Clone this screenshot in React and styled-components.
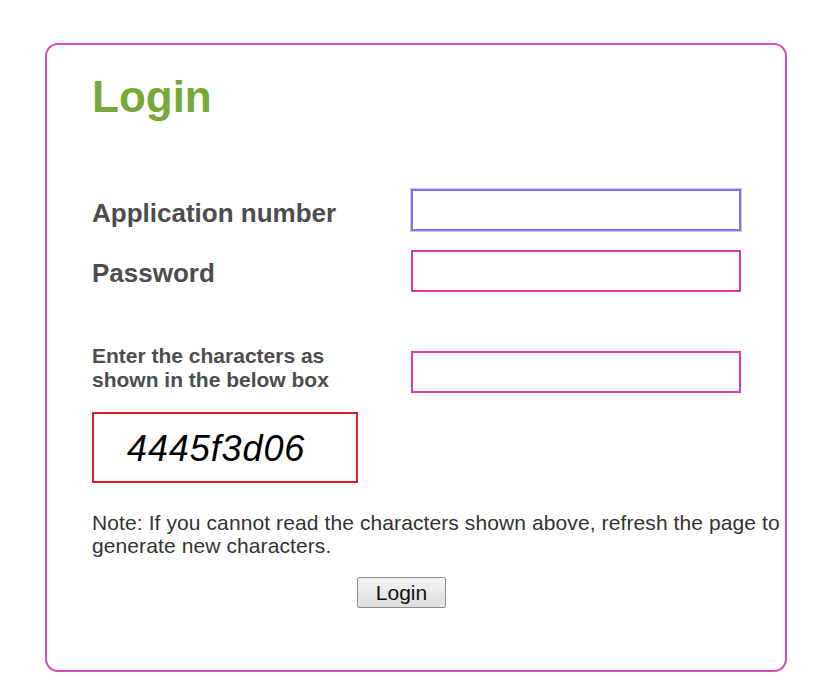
import React from "react";
import styled, { createGlobalStyle } from "styled-components";

const Global = createGlobalStyle`
  html, body { margin: 0; padding: 0; background: #ffffff; }
  body { font-family: "Liberation Sans", Arial, sans-serif; }
`;

const Page = styled.div`
  padding: 43px 0 0 45px;
`;

const Card = styled.div`
  box-sizing: border-box;
  width: 742px;
  height: 629px;
  border: 2px solid #dd4bb8;
  border-radius: 13px;
  padding: 0 0 0 45px;
  display: flex;
  flex-direction: column;
`;

const Title = styled.h1`
  margin: 26px 0 0 0;
  font-size: 44px;
  line-height: 52px;
  font-weight: bold;
  color: #76a93a;
`;

const Row = styled.div`
  display: grid;
  grid-template-columns: 319px 330px;
  align-items: ${(p) => p.$align || "center"};
  margin-top: ${(p) => p.$top}px;
`;

const Label = styled.label`
  font-size: ${(p) => p.$size || 26}px;
  line-height: ${(p) => p.$lh || 30}px;
  padding-top: ${(p) => p.$pt || 0}px;
  font-weight: bold;
  color: #4d4d4d;
`;

const Input = styled.input`
  box-sizing: border-box;
  width: 330px;
  height: 42px;
  margin: ${(p) => p.$mt || 0}px 0 0 0;
  padding: 0 4px;
  font-size: 20px;
  font-family: inherit;
  outline: none;
  border: 2px solid ${(p) => (p.$focus ? "#8c6fe0" : "#dd3aa8")};
  box-shadow: ${(p) => (p.$focus ? "0 0 0 1px #b7c8fb" : "none")};
  caret-color: #333;
`;

const Captcha = styled.div`
  box-sizing: border-box;
  width: 266px;
  height: 71px;
  margin-top: ${(p) => p.$top}px;
  border: 2px solid #d3222c;
  display: flex;
  align-items: center;
  padding-left: 33px;
  padding-top: 3px;
  font-size: 36px;
  font-style: italic;
  letter-spacing: 0.9px;
  color: #000;
`;

const Note = styled.p`
  margin: 28px 0 0 0;
  font-size: 21px;
  line-height: 23px;
  letter-spacing: 0.1px;
  color: #333;
  width: 700px;
`;

const ButtonRow = styled.div`
  display: flex;
  margin-top: 20px;
  padding-left: 265px;
`;

const Button = styled.button`
  box-sizing: border-box;
  width: 89px;
  height: 31px;
  font-family: inherit;
  font-size: 21px;
  line-height: 1;
  color: #111;
  border: 1px solid #8e8e8e;
  border-radius: 2px;
  background: linear-gradient(#f4f4f4, #dedede);
  padding: 0;
`;

export default function App() {
  return (
    <>
      <Global />
      <Page>
        <Card>
          <Title>Login</Title>
          <Row $top={66}>
            <Label $pt={6}>Application number</Label>
            <Input $focus autoFocus />
          </Row>
          <Row $top={19}>
            <Label $pt={4}>Password</Label>
            <Input type="password" />
          </Row>
          <Row $top={52} $align="start">
            <Label $size={21} $lh={24}>
              Enter the characters as
              <br />
              shown in the below box
            </Label>
            <Input $mt={7} />
          </Row>
          <Captcha $top={19}>4445f3d06</Captcha>
          <Note>
            Note: If you cannot read the characters shown above, refresh the page to generate new characters.
          </Note>
          <ButtonRow>
            <Button>Login</Button>
          </ButtonRow>
        </Card>
      </Page>
    </>
  );
}
